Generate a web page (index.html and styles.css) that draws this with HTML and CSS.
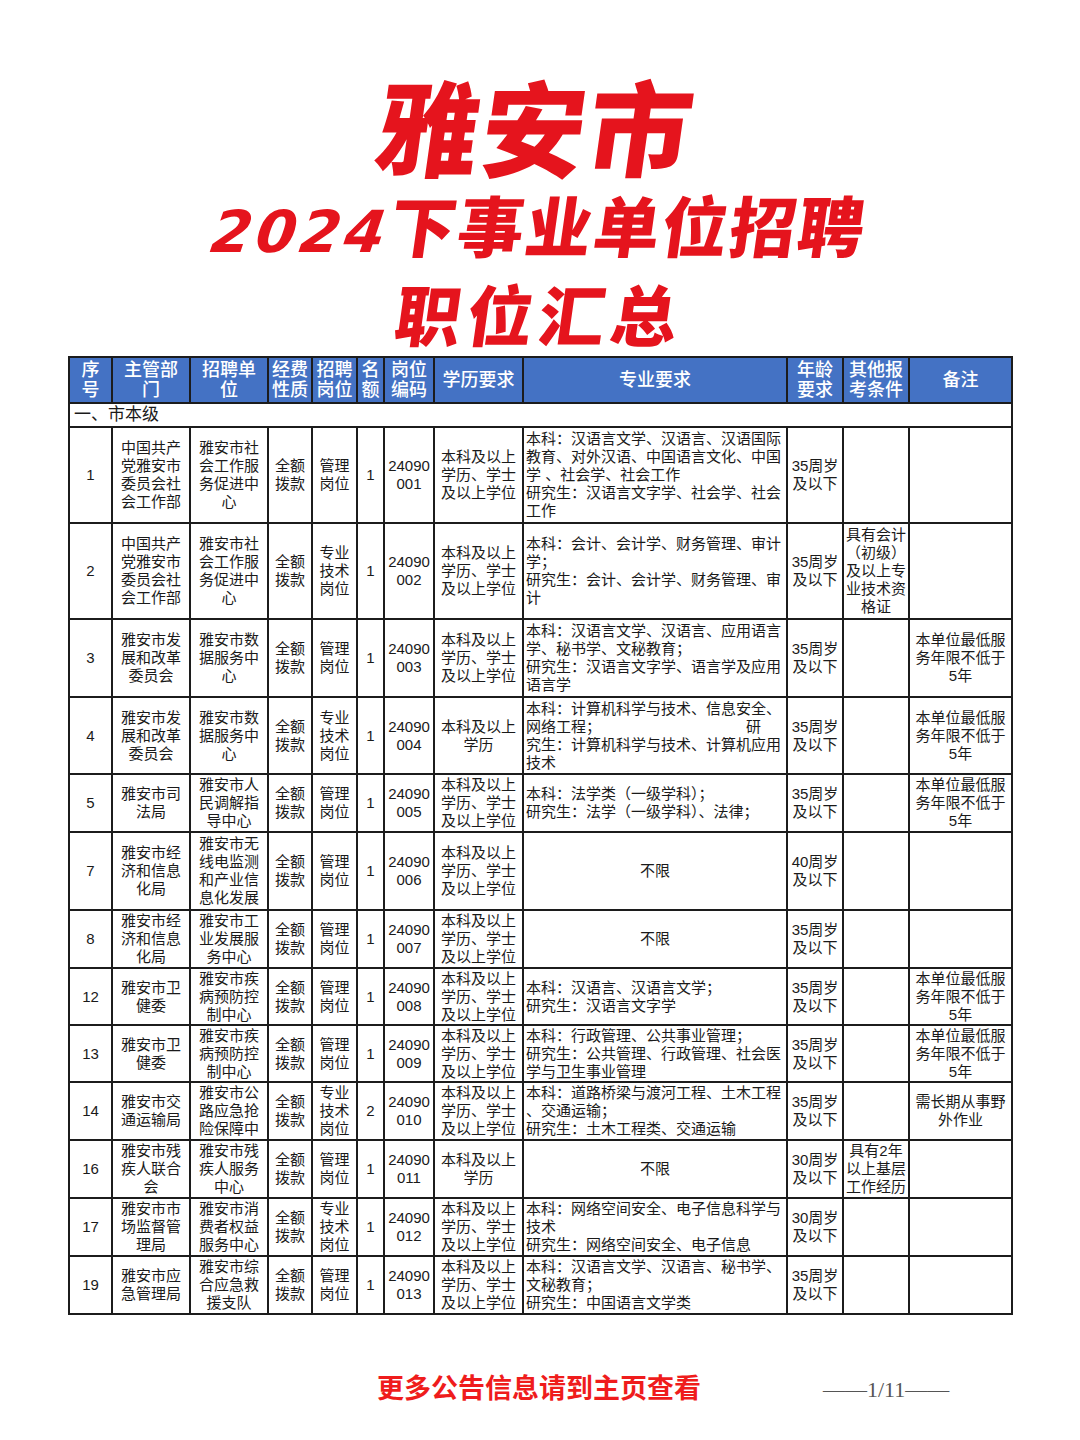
FILE: index.html
```html
<!DOCTYPE html>
<html lang="zh">
<head>
<meta charset="utf-8">
<title>雅安市2024下事业单位招聘职位汇总</title>
<link rel="stylesheet" href="styles.css">
</head>
<body>
<div class="page">
  <header class="title">
    <div class="t1">雅安市</div>
    <div class="t2"><span class="dg">2024</span>下事业单位招聘</div>
    <div class="t3">职位汇总</div>
  </header>

  <table class="grid">
    <colgroup>
      <col class="c1"><col class="c2"><col class="c3"><col class="c4"><col class="c5"><col class="c6">
      <col class="c7"><col class="c8"><col class="c9"><col class="c10"><col class="c11"><col class="c12">
    </colgroup>
    <thead>
      <tr class="hd">
        <th>序<br>号</th><th>主管部<br>门</th><th>招聘单<br>位</th><th>经费<br>性质</th><th>招聘<br>岗位</th><th>名<br>额</th>
        <th>岗位<br>编码</th><th>学历要求</th><th>专业要求</th><th>年龄<br>要求</th><th>其他报<br>考条件</th><th>备注</th>
      </tr>
    </thead>
    <tbody>
      <tr class="sec"><td colspan="12">一、市本级</td></tr>

      <tr class="h95">
        <td>1</td><td>中国共产<br>党雅安市<br>委员会社<br>会工作部</td><td>雅安市社<br>会工作服<br>务促进中<br>心</td><td>全额<br>拨款</td><td>管理<br>岗位</td><td>1</td><td>24090<br>001</td>
        <td>本科及以上<br>学历、学士<br>及以上学位</td>
        <td class="major">本科：汉语言文学、汉语言、汉语国际<br>教育、对外汉语、中国语言文化、中国<br>学 、社会学、社会工作<br>研究生：汉语言文字学、社会学、社会<br>工作</td>
        <td>35周岁<br>及以下</td><td></td><td></td>
      </tr>

      <tr class="h96">
        <td>2</td><td>中国共产<br>党雅安市<br>委员会社<br>会工作部</td><td>雅安市社<br>会工作服<br>务促进中<br>心</td><td>全额<br>拨款</td><td>专业<br>技术<br>岗位</td><td>1</td><td>24090<br>002</td>
        <td>本科及以上<br>学历、学士<br>及以上学位</td>
        <td class="major">本科：会计、会计学、财务管理、审计<br>学；<br>研究生：会计、会计学、财务管理、审<br>计</td>
        <td>35周岁<br>及以下</td><td>具有会计<br>（初级）<br>及以上专<br>业技术资<br>格证</td><td></td>
      </tr>

      <tr class="h78">
        <td>3</td><td>雅安市发<br>展和改革<br>委员会</td><td>雅安市数<br>据服务中<br>心</td><td>全额<br>拨款</td><td>管理<br>岗位</td><td>1</td><td>24090<br>003</td>
        <td>本科及以上<br>学历、学士<br>及以上学位</td>
        <td class="major">本科：汉语言文学、汉语言、应用语言<br>学、秘书学、文秘教育；<br>研究生：汉语言文字学、语言学及应用<br>语言学</td>
        <td>35周岁<br>及以下</td><td></td><td>本单位最低服<br>务年限不低于<br>5年</td>
      </tr>

      <tr class="h77">
        <td>4</td><td>雅安市发<br>展和改革<br>委员会</td><td>雅安市数<br>据服务中<br>心</td><td>全额<br>拨款</td><td>专业<br>技术<br>岗位</td><td>1</td><td>24090<br>004</td>
        <td>本科及以上<br>学历</td>
        <td class="major">本科：计算机科学与技术、信息安全、<br><span class="just"><span>网络工程；</span><span>研</span></span>究生：计算机科学与技术、计算机应用<br>技术</td>
        <td>35周岁<br>及以下</td><td></td><td>本单位最低服<br>务年限不低于<br>5年</td>
      </tr>

      <tr class="h58">
        <td>5</td><td>雅安市司<br>法局</td><td>雅安市人<br>民调解指<br>导中心</td><td>全额<br>拨款</td><td>管理<br>岗位</td><td>1</td><td>24090<br>005</td>
        <td>本科及以上<br>学历、学士<br>及以上学位</td>
        <td class="major">本科：法学类（一级学科）；<br>研究生：法学（一级学科）、法律；</td>
        <td>35周岁<br>及以下</td><td></td><td>本单位最低服<br>务年限不低于<br>5年</td>
      </tr>

      <tr class="h78">
        <td>7</td><td>雅安市经<br>济和信息<br>化局</td><td>雅安市无<br>线电监测<br>和产业信<br>息化发展</td><td>全额<br>拨款</td><td>管理<br>岗位</td><td>1</td><td>24090<br>006</td>
        <td>本科及以上<br>学历、学士<br>及以上学位</td>
        <td>不限</td>
        <td>40周岁<br>及以下</td><td></td><td></td>
      </tr>

      <tr class="h58">
        <td>8</td><td>雅安市经<br>济和信息<br>化局</td><td>雅安市工<br>业发展服<br>务中心</td><td>全额<br>拨款</td><td>管理<br>岗位</td><td>1</td><td>24090<br>007</td>
        <td>本科及以上<br>学历、学士<br>及以上学位</td>
        <td>不限</td>
        <td>35周岁<br>及以下</td><td></td><td></td>
      </tr>

      <tr class="h57">
        <td>12</td><td>雅安市卫<br>健委</td><td>雅安市疾<br>病预防控<br>制中心</td><td>全额<br>拨款</td><td>管理<br>岗位</td><td>1</td><td>24090<br>008</td>
        <td>本科及以上<br>学历、学士<br>及以上学位</td>
        <td class="major">本科：汉语言、汉语言文学；<br>研究生：汉语言文字学</td>
        <td>35周岁<br>及以下</td><td></td><td>本单位最低服<br>务年限不低于<br>5年</td>
      </tr>

      <tr class="h57">
        <td>13</td><td>雅安市卫<br>健委</td><td>雅安市疾<br>病预防控<br>制中心</td><td>全额<br>拨款</td><td>管理<br>岗位</td><td>1</td><td>24090<br>009</td>
        <td>本科及以上<br>学历、学士<br>及以上学位</td>
        <td class="major">本科：行政管理、公共事业管理；<br>研究生：公共管理、行政管理、社会医<br>学与卫生事业管理</td>
        <td>35周岁<br>及以下</td><td></td><td>本单位最低服<br>务年限不低于<br>5年</td>
      </tr>

      <tr class="h58">
        <td>14</td><td>雅安市交<br>通运输局</td><td>雅安市公<br>路应急抢<br>险保障中</td><td>全额<br>拨款</td><td>专业<br>技术<br>岗位</td><td>2</td><td>24090<br>010</td>
        <td>本科及以上<br>学历、学士<br>及以上学位</td>
        <td class="major">本科：道路桥梁与渡河工程、土木工程<br>、交通运输；<br>研究生：土木工程类、交通运输</td>
        <td>35周岁<br>及以下</td><td></td><td>需长期从事野<br>外作业</td>
      </tr>

      <tr class="h58">
        <td>16</td><td>雅安市残<br>疾人联合<br>会</td><td>雅安市残<br>疾人服务<br>中心</td><td>全额<br>拨款</td><td>管理<br>岗位</td><td>1</td><td>24090<br>011</td>
        <td>本科及以上<br>学历</td>
        <td>不限</td>
        <td>30周岁<br>及以下</td><td>具有2年<br>以上基层<br>工作经历</td><td></td>
      </tr>

      <tr class="h58">
        <td>17</td><td>雅安市市<br>场监督管<br>理局</td><td>雅安市消<br>费者权益<br>服务中心</td><td>全额<br>拨款</td><td>专业<br>技术<br>岗位</td><td>1</td><td>24090<br>012</td>
        <td>本科及以上<br>学历、学士<br>及以上学位</td>
        <td class="major">本科：网络空间安全、电子信息科学与<br>技术<br>研究生：网络空间安全、电子信息</td>
        <td>30周岁<br>及以下</td><td></td><td></td>
      </tr>

      <tr class="h58">
        <td>19</td><td>雅安市应<br>急管理局</td><td>雅安市综<br>合应急救<br>援支队</td><td>全额<br>拨款</td><td>管理<br>岗位</td><td>1</td><td>24090<br>013</td>
        <td>本科及以上<br>学历、学士<br>及以上学位</td>
        <td class="major">本科：汉语言文学、汉语言、秘书学、<br>文秘教育；<br>研究生：中国语言文学类</td>
        <td>35周岁<br>及以下</td><td></td><td></td>
      </tr>
    </tbody>
  </table>

  <footer class="foot">
    <div class="more">更多公告信息请到主页查看</div>
    <div class="pageno">——1/11——</div>
  </footer>
</div>
</body>
</html>
```

FILE: styles.css
```css
html, body {
  margin: 0;
  padding: 0;
  background: #ffffff;
}

.page {
  width: 1080px;
  height: 1440px;
  overflow: hidden;
  position: relative;
  font-family: "Liberation Sans", "Noto Sans CJK SC", sans-serif;
  color: #1a1a1a;
}

.title {
  height: 356px;
  display: flex;
  flex-direction: column;
  align-items: center;
  color: #e5141d;
  font-family: "Noto Sans CJK SC", sans-serif;
  font-weight: 900;
  line-height: 1;
}

.t1 {
  margin-top: 72px;
  margin-right: 8px;
  font-size: 104px;
  letter-spacing: 2px;
  transform: skewX(-8deg);
}

.t2 {
  margin-top: 14px;
  font-size: 66px;
  letter-spacing: 2px;
  transform: skewX(-8deg);
}

.t2 .dg {
  font-family: "DejaVu Sans", sans-serif;
  font-weight: 700;
  font-style: italic;
  font-size: 58px;
  letter-spacing: 4px;
}

.t3 {
  margin-top: 18px;
  font-size: 66px;
  letter-spacing: 6px;
  transform: skewX(-8deg);
}

.grid {
  margin-left: 68px;
  width: 943px;
  border-collapse: collapse;
  table-layout: fixed;
  font-size: 15px;
  line-height: 18px;
}

.c1 { width: 43px; }
.c2 { width: 78px; }
.c3 { width: 78px; }
.c4 { width: 44px; }
.c5 { width: 45px; }
.c6 { width: 27px; }
.c7 { width: 50px; }
.c8 { width: 89px; }
.c9 { width: 264px; }
.c10 { width: 56px; }
.c11 { width: 66px; }
.c12 { width: 103px; }

.grid th,
.grid td {
  border: 2px solid #1c1c1c;
  padding: 0 1px;
  text-align: center;
  vertical-align: middle;
  overflow: hidden;
  white-space: nowrap;
}

.hd th {
  background: #4472c4;
  color: #ffffff;
  font-weight: 500;
  font-size: 18px;
  line-height: 20px;
  height: 44px;
  font-family: "Liberation Sans", "Noto Sans CJK SC", sans-serif;
}

.sec td {
  text-align: left;
  height: 22px;
  font-size: 17px;
  padding-left: 4px;
  font-family: "Liberation Sans", "Noto Sans CJK SC", sans-serif;
}

.grid td.major {
  text-align: left;
  padding-left: 2px;
  font-family: "Liberation Sans", "Noto Sans CJK SC", sans-serif;
}

.just {
  display: flex;
  justify-content: space-between;
  padding-right: 24px;
}

.h95 td { height: 94px; }
.h96 td { height: 94px; }
.h78 td { height: 76px; }
.h77 td { height: 75px; }
.h58 td { height: 56px; }
.h57 td { height: 55px; }

.foot {
  display: flex;
  align-items: center;
  margin-top: 54px;
  height: 34px;
}

.more {
  margin-left: 377px;
  color: #ef1c1c;
  font-family: "Noto Sans CJK SC", sans-serif;
  font-weight: 700;
  font-size: 27px;
}

.pageno {
  margin-left: 122px;
  margin-top: 8px;
  color: #555555;
  font-family: "Liberation Serif", serif;
  font-size: 22px;
}
```
